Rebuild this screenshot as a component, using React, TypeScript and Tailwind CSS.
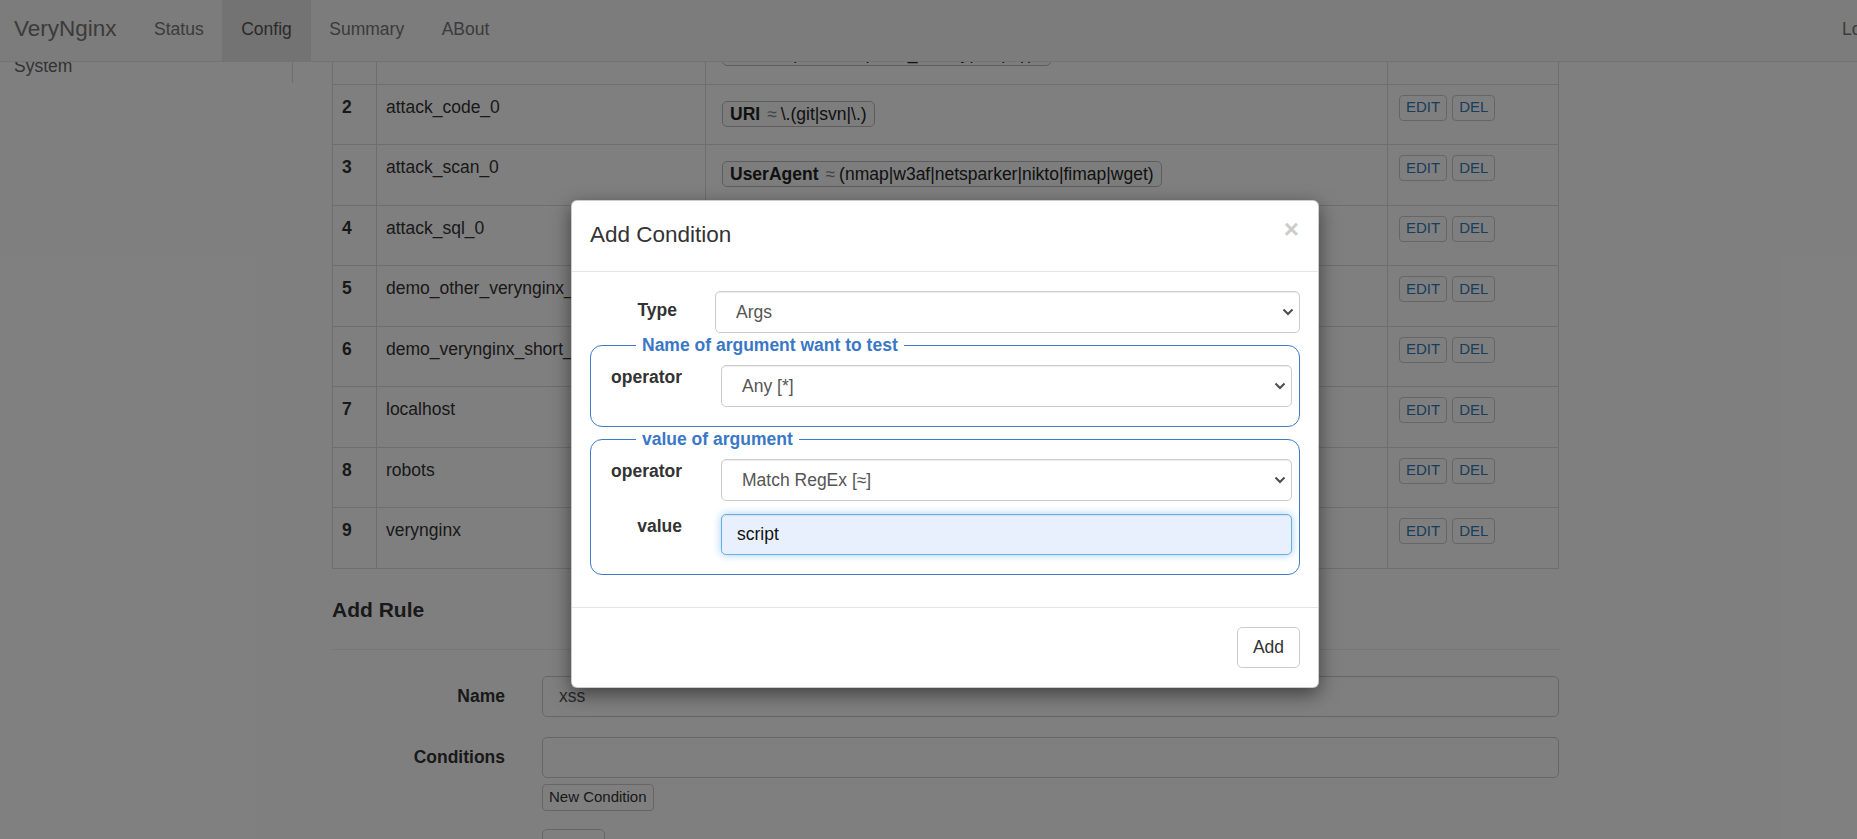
import React from 'react';

type Matcher = {
  id: number;
  name: string;
  field: string;
  op: string;
  value: string;
};

const matchers: Matcher[] = [
  { id: 1, name: 'attack_backup_0', field: 'URI', op: '≈', value: '\\.(htaccess|bash_history|ssh|sql)$' },
  { id: 2, name: 'attack_code_0', field: 'URI', op: '≈', value: '\\.(git|svn|\\.)' },
  { id: 3, name: 'attack_scan_0', field: 'UserAgent', op: '≈', value: '(nmap|w3af|netsparker|nikto|fimap|wget)' },
  { id: 4, name: 'attack_sql_0', field: 'Args', op: '≈', value: 'select.*from' },
  { id: 5, name: 'demo_other_verynginx_uri', field: 'URI', op: '=', value: '/redirect_to_verynginx' },
  { id: 6, name: 'demo_verynginx_short_uri', field: 'URI', op: '≈', value: '^/vn' },
  { id: 7, name: 'localhost', field: 'IP', op: '=', value: '127.0.0.1' },
  { id: 8, name: 'robots', field: 'URI', op: '=', value: '/robots.txt' },
  { id: 9, name: 'verynginx', field: 'URI', op: '≈', value: '^/verynginx/' },
];

const navItems = ['Status', 'Config', 'Summary', 'ABout'];

function Chevron() {
  return (
    <svg width="12" height="8" viewBox="0 0 12 8" className="shrink-0">
      <path d="M1.5 1.5 6 6l4.5-4.5" fill="none" stroke="#4d4d4d" strokeWidth="2" />
    </svg>
  );
}

function SelectBox({ value }: { value: string }) {
  return (
    <div className="flex h-[42px] flex-1 items-center justify-between rounded-[5px] border border-[#ccc] bg-white pl-[20px] pr-[5px] text-[#555] shadow-[inset_0_1px_1px_rgba(0,0,0,0.075)]">
      <span>{value}</span>
      <Chevron />
    </div>
  );
}

function Navbar() {
  return (
    <nav className="flex h-[62px] border-b border-[#e7e7e7] bg-[#f8f8f8]">
      <span className="flex items-center pb-[3px] pl-[14px] pr-[18.75px] text-[22.5px] text-[#777]">VeryNginx</span>
      {navItems.map((item) => (
        <span
          key={item}
          className={
            item === 'Config'
              ? 'flex items-center bg-[#e7e7e7] px-[18.75px] pb-[3px] text-[#555]'
              : 'flex items-center px-[18.75px] pb-[3px] text-[#777]'
          }
        >
          {item}
        </span>
      ))}
      <div className="flex-1" />
      <div className="flex w-[15px] items-center overflow-hidden whitespace-nowrap pb-[3px] text-[#777]">Logout</div>
    </nav>
  );
}

function MatcherTable() {
  return (
    <div className="border-x border-[#ddd]">
      {matchers.map((m) => (
        <div key={m.id} className="grid h-[60.5px] grid-cols-[44px_329px_682px_170px] border-b border-[#ddd]">
          <div className="border-r border-[#ddd] pl-[9px] pt-[10px] font-bold leading-[25px]">{m.id}</div>
          <div className="overflow-hidden whitespace-nowrap border-r border-[#ddd] pl-[9px] pt-[10px] leading-[25px]">
            {m.name}
          </div>
          <div className="border-r border-[#ddd] pl-[16px] pt-[16px]">
            <span className="inline-flex h-[26px] items-center whitespace-nowrap rounded-[5px] border border-[#bbb] bg-[#fafafa] px-[7px] leading-[22px] text-[#222]">
              <b className="text-[#222]">{m.field}</b>
              <span className="ml-[7px] text-[#888]">{m.op}</span>
              <span className="ml-[4px]">{m.value}</span>
            </span>
          </div>
          <div className="flex gap-[5px] pl-[11px] pt-[10px]">
            <span className="flex h-[26px] items-center rounded-[4px] border border-[#ccc] px-[6px] text-[15px] text-[#337ab7]">EDIT</span>
            <span className="flex h-[26px] items-center rounded-[4px] border border-[#ccc] px-[6px] text-[15px] text-[#337ab7]">DEL</span>
          </div>
        </div>
      ))}
    </div>
  );
}

function AddRule() {
  return (
    <div>
      <h4 className="mt-[26px] text-[21px] font-bold leading-[30px] text-[#333]">Add Rule</h4>
      <div className="mt-[24px] border-t border-[#eee]" />
      <div className="mt-[26px] flex gap-[37px]">
        <div className="w-[173px] pt-[8px] text-right font-bold leading-[25px]">Name</div>
        <div className="flex h-[41px] flex-1 items-center rounded-[5px] border border-[#ccc] pl-[16px] text-[#555]">xss</div>
      </div>
      <div className="mt-[20px] flex gap-[37px]">
        <div className="w-[173px] pt-[8px] text-right font-bold leading-[25px]">Conditions</div>
        <div className="flex-1">
          <div className="h-[41px] rounded-[5px] border border-[#ccc]" />
          <div className="mt-[6px] inline-flex h-[27px] items-center rounded-[4px] border border-[#ccc] px-[6px] text-[15px] text-[#333]">
            New Condition
          </div>
          <div className="mt-[18px] flex h-[41px] w-[63px] items-center justify-center rounded-[5px] border border-[#ccc]">Add</div>
        </div>
      </div>
    </div>
  );
}

function FieldRow({ label, children, className }: { label: string; children: React.ReactNode; className: string }) {
  return (
    <div className={className}>
      <div className="w-[91px] shrink-0 text-right font-bold leading-[25px] text-[#333]">{label}</div>
      {children}
    </div>
  );
}

function AddConditionModal() {
  return (
    <div className="absolute left-[571px] top-[200px] w-[748px] rounded-[6px] border border-black/20 bg-white shadow-[0_6px_19px_rgba(0,0,0,0.5)]">
      <div className="flex h-[71px] items-center justify-between border-b border-[#e5e5e5] pl-[18px] pr-[19px]">
        <h4 className="pb-[2px] text-[22.5px] leading-[32px] text-[#333]">Add Condition</h4>
        <span className="-mt-[14px] text-[26px] font-bold leading-none text-[#ccc]">×</span>
      </div>

      <div className="px-[18px] pb-[32px] pt-[19px]">
        <div className="flex gap-[38px]">
          <div className="w-[87px] pt-[6.5px] text-right font-bold leading-[25px] text-[#333]">Type</div>
          <SelectBox value="Args" />
        </div>

        <fieldset className="rounded-[12px] border border-[#3d7cc9] pb-[19px]">
          <legend className="ml-[45px] px-[6px] font-bold leading-[25px] text-[#3a78c6]">Name of argument want to test</legend>
          <FieldRow label="operator" className="mt-[7px] flex gap-[39px] pr-[7px]">
            <SelectBox value="Any [*]" />
          </FieldRow>
        </fieldset>

        <fieldset className="rounded-[12px] border border-[#3d7cc9] pb-[19px]">
          <legend className="ml-[45px] px-[6px] font-bold leading-[25px] text-[#3a78c6]">value of argument</legend>
          <FieldRow label="operator" className="mt-[7px] flex gap-[39px] pr-[7px]">
            <SelectBox value="Match RegEx [≈]" />
          </FieldRow>
          <FieldRow label="value" className="mt-[13px] flex gap-[39px] pr-[7px]">
            <div className="flex h-[41px] flex-1 items-center rounded-[5px] border border-[#66afe9] bg-[#e8f0fe] pl-[15px] text-[#111] shadow-[inset_0_1px_1px_rgba(0,0,0,0.075),0_0_8px_rgba(102,175,233,0.6)]">
              script
            </div>
          </FieldRow>
        </fieldset>
      </div>

      <div className="flex justify-end border-t border-[#e5e5e5] px-[18px] py-[19px]">
        <div className="flex h-[41px] w-[63px] items-center justify-center rounded-[5px] border border-[#ccc] text-[#333]">Add</div>
      </div>
    </div>
  );
}

export default function App() {
  return (
    <div className="relative h-[839px] w-[1857px] overflow-hidden bg-white font-['Liberation_Sans',Arial,sans-serif] text-[17.5px] text-[#333]">
      <Navbar />

      <div className="h-[777px] overflow-hidden">
        <div className="flex items-start">
          <aside className="-mt-[8px] w-[293px] shrink-0">
            <div className="h-[29px] border-r border-[#ddd] pl-[14px] leading-[25px] text-[#666]">System</div>
          </aside>
          <main className="-mt-[38px] ml-[39px] w-[1227px] shrink-0">
            <MatcherTable />
            <AddRule />
          </main>
        </div>
      </div>

      {/* backdrop */}
      <div className="absolute inset-0 bg-black/50" />

      <AddConditionModal />
    </div>
  );
}
